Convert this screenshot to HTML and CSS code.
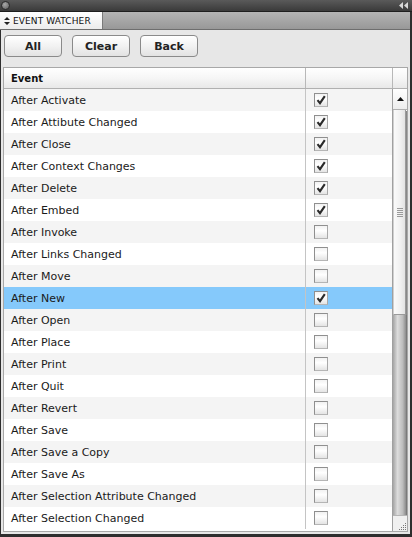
FILE: index.html
```html
<!DOCTYPE html>
<html>
<head>
<meta charset="utf-8">
<link rel="stylesheet" href="styles.css">
</head>
<body>
<div class="window">
  <div class="titlebar">
    <span class="dot"></span>
    <svg class="collapse" width="10" height="7" viewBox="0 0 10 7"><path d="M4 0 L0 3.5 L4 7 Z M9 0 L5 3.5 L9 7 Z" fill="#d8d8d8"/></svg>
  </div>
  <div class="tabbar">
    <div class="tab"><svg class="updown" width="6" height="8" viewBox="0 0 6 8"><path d="M3 0 L6 3 L0 3 Z M3 8 L6 5 L0 5 Z" fill="#222"/></svg>EVENT WATCHER</div>
  </div>
  <div class="panel">
    <div class="buttons">
      <button class="btn">All</button>
      <button class="btn">Clear</button>
      <button class="btn">Back</button>
    </div>
    <div class="table">
      <div class="thead">
        <div class="th th-event">Event</div>
        <div class="th th-check"></div>
        <div class="th th-scroll"></div>
      </div>
      <div class="tbody">
        <div class="rows" id="rows"></div>
        <div class="scrollbar">
          <div class="sb-up"><svg width="7" height="4" viewBox="0 0 7 4"><path d="M3.5 0 L7 4 L0 4 Z" fill="#111"/></svg></div>
          <div class="sb-thumb"><span class="grip"></span></div>
          <div class="sb-track"></div>
          <div class="sb-corner">
            <svg width="10" height="10" viewBox="0 0 10 10" fill="#777">
              <rect x="8" y="2" width="1" height="1"/><rect x="6" y="4" width="1" height="1"/><rect x="8" y="4" width="1" height="1"/>
              <rect x="4" y="6" width="1" height="1"/><rect x="6" y="6" width="1" height="1"/><rect x="8" y="6" width="1" height="1"/>
              <rect x="2" y="8" width="1" height="1"/><rect x="4" y="8" width="1" height="1"/><rect x="6" y="8" width="1" height="1"/><rect x="8" y="8" width="1" height="1"/>
            </svg>
          </div>
        </div>
      </div>
    </div>
  </div>
</div>
<script>
var data = [
  ["After Activate",1],["After Attibute Changed",1],["After Close",1],["After Context Changes",1],
  ["After Delete",1],["After Embed",1],["After Invoke",0],["After Links Changed",0],["After Move",0],
  ["After New",1,1],["After Open",0],["After Place",0],["After Print",0],["After Quit",0],
  ["After Revert",0],["After Save",0],["After Save a Copy",0],["After Save As",0],
  ["After Selection Attribute Changed",0],["After Selection Changed",0]
];
var html = "";
data.forEach(function(d, i){
  var cls = "row" + (i % 2 === 0 ? " odd" : "") + (d[2] ? " selected" : "");
  var check = d[1] ? '<svg width="12" height="12" viewBox="0 0 12 12"><path d="M2.5 6.2 L5 9.2 L9.8 2.2" fill="none" stroke="#2a2a2a" stroke-width="2.1" stroke-linejoin="miter"/></svg>' : '';
  html += '<div class="' + cls + '"><div class="cell-event">' + d[0] + '</div><div class="cell-check"><span class="cb">' + check + '</span></div></div>';
});
document.getElementById("rows").innerHTML = html;
</script>
</body>
</html>
```
FILE: styles.css
```css
html, body {
  margin: 0;
  padding: 0;
  background: #2a2a2a;
}
.window {
  width: 412px;
  height: 537px;
  display: flex;
  flex-direction: column;
  font-family: "DejaVu Sans", Verdana, sans-serif;
  overflow: hidden;
  background: #2e2e2e;
}
.titlebar {
  height: 12px;
  flex: none;
  background: linear-gradient(#5a5a5a, #3a3a3a);
  display: flex;
  align-items: center;
  justify-content: space-between;
  padding: 0 3px 0 1px;
  border-bottom: 1px solid #1e1e1e;
  box-sizing: border-box;
}
.dot {
  width: 9px;
  height: 9px;
  border-radius: 50%;
  background: radial-gradient(circle at 40% 35%, #a8a8a8, #5a5a5a);
  border: 1px solid #2a2a2a;
  box-sizing: border-box;
}
.tabbar {
  height: 17px;
  flex: none;
  background: linear-gradient(#b4b4b4, #989898);
  display: flex;
  border-bottom: 1px solid #6e6e6e;
  margin: 0 2px 0 0;
}
.tab {
  width: 103px;
  background: linear-gradient(#ffffff, #ececec);
  font-size: 9px;
  color: #111;
  display: flex;
  align-items: center;
  gap: 3px;
  padding-left: 4px;
  box-sizing: border-box;
  border-right: 1px solid #7a7a7a;
  letter-spacing: 0.1px;
}
.panel {
  flex: 1;
  background: #e7e7e7;
  margin: 0 2px 4px 1px;
  display: flex;
  flex-direction: column;
  padding: 5px 2px 2px 2px;
}
.buttons {
  display: flex;
  gap: 10px;
  padding-left: 1px;
  height: 22px;
  margin-bottom: 10px;
}
.btn {
  width: 58px;
  height: 22px;
  border: 1px solid #8a8a8a;
  border-radius: 4px;
  background: linear-gradient(#ffffff, #f2f2f2 50%, #e2e2e2);
  font-family: "DejaVu Sans", Verdana, sans-serif;
  font-weight: bold;
  font-size: 11px;
  color: #222;
  padding: 0;
}
.table {
  border: 1px solid #a8a8a8;
  background: #fff;
  display: flex;
  flex-direction: column;
  height: 463px;
}
.thead {
  display: flex;
  height: 21px;
  border-bottom: 1px solid #b0b0b0;
  background: linear-gradient(#ffffff, #f6f6f6 50%, #e8e8e8);
  box-sizing: border-box;
}
.th {
  box-sizing: border-box;
}
.th-event {
  width: 302px;
  border-right: 1px solid #b8b8b8;
  font-weight: bold;
  font-size: 10px;
  color: #111;
  display: flex;
  align-items: center;
  padding-left: 7px;
}
.th-check {
  width: 87px;
  border-right: 1px solid #b8b8b8;
}
.th-scroll {
  width: 14px;
}
.tbody {
  display: flex;
  flex: 1;
  min-height: 0;
}
.rows {
  width: 389px;
  flex: none;
}
.row {
  display: flex;
  height: 22px;
  background: #ffffff;
}
.row.odd {
  background: #f4f4f4;
}
.row.selected {
  background: #85c9fb;
}
.cell-event {
  width: 302px;
  box-sizing: border-box;
  border-right: 1px solid #c4c4c4;
  font-size: 11px;
  color: #1a1a1a;
  display: flex;
  align-items: center;
  padding-left: 7px;
  white-space: nowrap;
}
.cell-check {
  flex: 1;
  display: flex;
  align-items: center;
  padding-left: 8px;
}
.cb {
  width: 14px;
  height: 14px;
  box-sizing: border-box;
  border: 1px solid #8f8f8f;
  border-bottom-color: #b5b5b5;
  border-right-color: #a8a8a8;
  background: linear-gradient(#f2f2f2, #ffffff 40%, #e4e4e4);
  display: flex;
  align-items: center;
  justify-content: center;
}
.scrollbar {
  flex: none;
  display: flex;
  flex-direction: column;
  border-left: 1px solid #a0a0a0;
  box-sizing: border-box;
  width: 15px;
  margin-left: -1px;
}
.sb-up {
  height: 21px;
  background: linear-gradient(#ffffff, #ededed);
  border-bottom: 1px solid #b0b0b0;
  display: flex;
  align-items: center;
  justify-content: center;
  flex: none;
  box-sizing: border-box;
}
.sb-thumb {
  height: 205px;
  flex: none;
  box-sizing: border-box;
  background: linear-gradient(90deg, #fafafa, #f0f0f0 60%, #e2e2e2);
  border: 1px solid #9a9a9a;
  border-top: none;
  border-left-color: #cfcfcf;
  display: flex;
  align-items: center;
  justify-content: center;
  margin-right: 1px;
  box-shadow: 1px 1px 0 #888;
}
.grip {
  width: 6px;
  height: 9px;
  background: repeating-linear-gradient(#9a9a9a 0 1px, transparent 1px 2px);
}
.sb-track {
  flex: 1;
  background: linear-gradient(90deg, #a4a4a4, #dcdcdc 35%, #bcbcbc 75%, #8c8c8c);
  border-right: 1px solid #7a7a7a;
}
.sb-corner {
  height: 15px;
  flex: none;
  background: #f0f0f0;
  border-top: 1px solid #b5b5b5;
  display: flex;
  align-items: flex-end;
  justify-content: flex-end;
}
```
